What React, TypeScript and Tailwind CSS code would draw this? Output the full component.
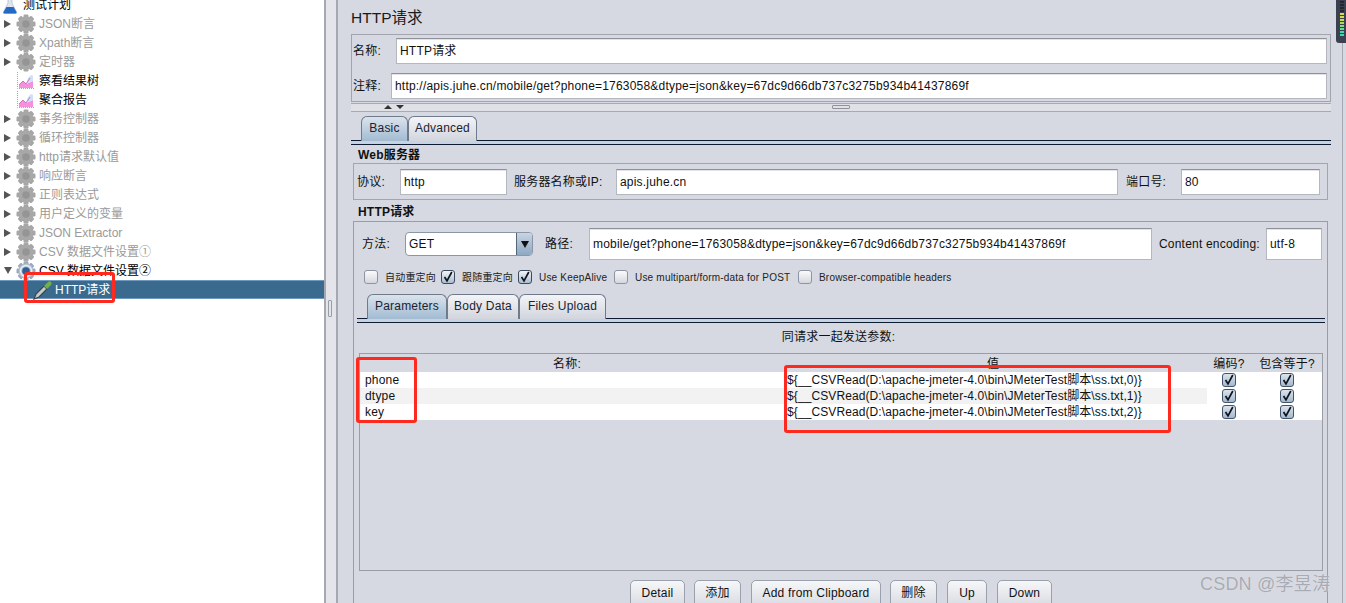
import type { ReactNode } from "react";

const treeItems = [
  { label: "测试计划", icon: "flask", dark: true },
  { label: "JSON断言", icon: "gear", arrow: "right" },
  { label: "Xpath断言", icon: "gear", arrow: "right" },
  { label: "定时器", icon: "gear", arrow: "right" },
  { label: "察看结果树", icon: "chart", dark: true },
  { label: "聚合报告", icon: "chart", dark: true },
  { label: "事务控制器", icon: "gear", arrow: "right" },
  { label: "循环控制器", icon: "gear", arrow: "right" },
  { label: "http请求默认值", icon: "gear", arrow: "right" },
  { label: "响应断言", icon: "gear", arrow: "right" },
  { label: "正则表达式", icon: "gear", arrow: "right" },
  { label: "用户定义的变量", icon: "gear", arrow: "right" },
  { label: "JSON Extractor", icon: "gear", arrow: "right" },
  { label: "CSV 数据文件设置①", icon: "gear", arrow: "right" },
  { label: "CSV 数据文件设置②", icon: "gearActive", arrow: "down", dark: true },
];

const params = [
  { name: "phone", value: "${__CSVRead(D:\\apache-jmeter-4.0\\bin\\JMeterTest脚本\\ss.txt,0)}" },
  { name: "dtype", value: "${__CSVRead(D:\\apache-jmeter-4.0\\bin\\JMeterTest脚本\\ss.txt,1)}" },
  { name: "key", value: "${__CSVRead(D:\\apache-jmeter-4.0\\bin\\JMeterTest脚本\\ss.txt,2)}" },
];

const meterBars = ["#23262f", "#23262f", "#23262f", "#23262f", "#d9d94a", "#d9d94a", "#c6dc50", "#a8dc5a", "#80dc78", "#60dc98", "#40d8b0", "#40d8b0"];

const url = "http://apis.juhe.cn/mobile/get?phone=1763058&dtype=json&key=67dc9d66db737c3275b934b41437869f";

function Gear({ active }: { active?: boolean }) {
  const teeth = [0, 45, 90, 135, 180, 225, 270, 315];
  return (
    <svg width="20" height="20" viewBox="0 0 20 20" className="shrink-0">
      {teeth.map((deg) => (
        <rect key={deg} x="7.5" y="0.5" width="5" height="5" rx="1.2" fill={active ? "#9aa8bb" : "#a6a6a6"} transform={`rotate(${deg} 10 10)`} />
      ))}
      <circle cx="10" cy="10" r="7.5" fill={active ? "#b4bfcd" : "#a8a8a8"} />
      <circle cx="10" cy="10" r="3.8" fill={active ? "#2f5d9a" : "#959595"} />
      {active && <circle cx="10" cy="10" r="5.500" fill="none" stroke="#e8eef5" strokeWidth="1.400" />}
    </svg>
  );
}

function Flask() {
  return (
    <svg width="14" height="19" viewBox="0 0 14 19" className="shrink-0">
      <path d="M5 0h4v8l4.500 9q.3 1.500-1 1.500H1.500Q.2 18.500.5 17L5 8z" fill="#dfe6f0" stroke="#a3aebf" strokeWidth="0.600" />
      <path d="M3.500 12h7l3 5q.3 1.500-1 1.500H1.500Q.2 18.500.5 17z" fill="#2468c8" />
    </svg>
  );
}

function ChartIcon() {
  return (
    <svg width="17" height="17" viewBox="0 0 17 17" className="shrink-0">
      <path d="M.5 0v16.500H17" fill="none" stroke="#a8a8a8" strokeWidth="1" strokeDasharray="1 1" />
      <path d="M2 16v-3l4-4 3 3 7-3v7z" fill="#f490de" />
      <path d="M9 12l2-6 3-3 2 1v5z" fill="#cfe0f8" />
      <path d="M2 13l4-4 3 3 4-6" fill="none" stroke="#c85ab0" strokeWidth="0.800" />
    </svg>
  );
}

function Dropper() {
  return (
    <svg width="20" height="20" viewBox="0 0 20 20" className="shrink-0">
      <path d="M1 19l2-5 8-8 3 3-8 8z" fill="#c4ccc9" stroke="#39444d" strokeWidth="1.200" />
      <path d="M11 6l4-4q1.500-1.500 3 0t0 3l-4 4z" fill="#6fb04c" />
    </svg>
  );
}

function TreeRow({ item }: { item: (typeof treeItems)[number] }) {
  const offset = item.icon === "flask" ? "pl-[3px]" : item.icon === "chart" ? "pl-[17px]" : "pl-[4px]";
  const gap = item.icon === "flask" ? "ml-[6px]" : item.icon === "chart" ? "ml-[5px]" : "ml-[3px]";
  return (
    <div className={`flex h-[19px] items-center ${offset}`}>
      {item.arrow === "right" && <span className="mr-[5px] h-0 w-0 border-y-[4px] border-l-[7px] border-y-transparent border-l-[#555]" />}
      {item.arrow === "down" && <span className="mr-[4px] h-0 w-0 border-x-[4px] border-t-[7px] border-x-transparent border-t-[#555]" />}
      {item.icon === "gear" && <Gear />}
      {item.icon === "gearActive" && <Gear active />}
      {item.icon === "flask" && <Flask />}
      {item.icon === "chart" && <ChartIcon />}
      <span className={`whitespace-nowrap ${gap} ${item.dark ? "text-black" : "text-[#9a9a9a]"}`}>{item.label}</span>
    </div>
  );
}

function Field({ className, children }: { className: string; children: ReactNode }) {
  return (
    <div className={`flex items-center whitespace-nowrap border border-[#b4b7bf] border-t-[#8e9198] bg-white pl-[3px] text-[#111] shadow-[inset_0_1px_0_#e2e3e6] ${className}`}>
      {children}
    </div>
  );
}

function Tab({ label, active, className }: { label: string; active?: boolean; className: string }) {
  return (
    <div
      className={`flex h-[25px] items-center justify-center rounded-t-[6px] border border-b-0 border-[#6f7a8a] pb-[3px] text-[#1c2230] ${
        active ? "bg-linear-to-b from-[#dbe3ec] to-[#a2bbd2]" : "bg-linear-to-b from-[#f3f4f7] to-[#d2d5dd]"
      } ${className}`}
    >
      {label}
    </div>
  );
}

function TabLine({ className }: { className: string }) {
  return <div className={`h-[5px] border-y border-[#0e1a30] bg-[#c5d3e3] ${className}`} />;
}

function CheckBox({ checked, className = "" }: { checked?: boolean; className?: string }) {
  return (
    <span
      className={`flex h-[14px] w-[14px] shrink-0 items-center justify-center rounded-[3px] border ${
        checked ? "border-[#3c4a5c] bg-linear-to-b from-[#f2f5f8] to-[#a9bdd2]" : "border-[#8d95a2] bg-linear-to-b from-[#fbfbfc] to-[#d4d7de]"
      } ${className}`}
    >
      {checked && (
        <svg width="12" height="12" viewBox="0 0 12 12">
          <path d="M2.500 6l2.500 3.800L9.800 1" fill="none" stroke="#10151d" strokeWidth="1.700" />
        </svg>
      )}
    </span>
  );
}

function Option({ label, checked, className }: { label: string; checked?: boolean; className: string }) {
  return (
    <div className={`flex items-center ${className}`}>
      <CheckBox checked={checked} />
      <span className="ml-[7px] whitespace-nowrap text-[10px] text-[#222]">{label}</span>
    </div>
  );
}

function ActionButton({ label, className }: { label: string; className: string }) {
  return (
    <div className={`flex h-[30px] items-start justify-center rounded-t-[5px] border border-[#9aa0ac] bg-linear-to-b from-[#f6f7f9] to-[#d5d8df] pt-[3px] text-[#111] ${className}`}>
      {label}
    </div>
  );
}

function Sidebar() {
  return (
    <aside className="h-full w-[324px] shrink-0 overflow-hidden bg-white">
      <div className="-mt-[5px]">
        {treeItems.map((item) => (
          <TreeRow key={item.label} item={item} />
        ))}
        <div className="flex h-[19px] items-center border-y border-[#6f9ac0] bg-[#3b6a8f] pl-[33px] text-white">
          <Dropper />
          <span className="ml-[2px]">HTTP请求</span>
        </div>
      </div>
    </aside>
  );
}

function Splitter() {
  return (
    <div className="flex h-full w-[14px] shrink-0 items-center justify-center border-x-2 border-[#a5a8b1] bg-[#e3e5ea]">
      <div className="-ml-[2px] mt-[14px] h-[17px] w-[4px] rounded-[1px] border border-[#9a9da6]" />
    </div>
  );
}

function ParamsTable() {
  return (
    <div className="ml-[2px] mr-[1px] mt-[9px] h-[218px] border border-[#9a9da6] pt-[1px]">
      <div className="flex h-[17px] items-center text-[#111]">
        <span className="w-[415px] pl-[193px]">名称:</span>
        <span className="w-[431px] pl-[212px]">值</span>
        <span className="w-[46px] text-center">编码?</span>
        <span className="w-[70px] text-center">包含等于?</span>
      </div>
      {params.map((row, i) => (
        <div key={row.name} className={`flex h-[16px] items-center text-[#111] ${i === 1 ? "bg-linear-to-r from-[#f2f2f2] from-[88%] to-white to-[88%]" : "bg-white"}`}>
          <span className="w-[427px] pl-[5px]">{row.name}</span>
          <span className="w-[419px] whitespace-nowrap tracking-[0.1px]">{row.value}</span>
          <span className="flex w-[46px] justify-center">
            <CheckBox checked className="!border-[#44536a] !from-[#dbe4ee] !to-[#a3b9d0]" />
          </span>
          <span className="flex w-[70px] justify-center">
            <CheckBox checked className="!border-[#44536a] !from-[#dbe4ee] !to-[#a3b9d0]" />
          </span>
        </div>
      ))}
    </div>
  );
}

function HttpPanel() {
  return (
    <div className="ml-[2px] mt-[2px] h-[400px] w-[975px] border border-[#9a9da6] px-[3px] pt-[6px]">
      <div className="flex h-[32px] items-center">
        <span className="ml-[5px] w-[43px]">方法:</span>
        <div className="flex h-[24px] w-[128px] overflow-hidden rounded-[4px] border border-[#8b97a6] bg-white">
          <span className="flex-1 pl-[3px] leading-[22px] text-[#111]">GET</span>
          <span className="flex w-[16px] items-center justify-center border-l border-[#55657a] bg-linear-to-b from-[#c8d5e2] to-[#8ea8c2]">
            <span className="h-0 w-0 border-x-[4px] border-t-[7px] border-x-transparent border-t-[#111]" />
          </span>
        </div>
        <span className="ml-[12px] w-[44px]">路径:</span>
        <Field className="h-[32px] w-[563px] pb-[1px]">{`mobile/get?phone=1763058&dtype=json&key=67dc9d66db737c3275b934b41437869f`}</Field>
        <span className="ml-[7px] w-[107px]">Content encoding:</span>
        <Field className="h-[32px] w-[56px] pb-[1px]">utf-8</Field>
      </div>
      <div className="mt-[10px] flex h-[14px] items-center">
        <Option label="自动重定向" className="ml-[7px] w-[77px]" />
        <Option label="跟随重定向" checked className="w-[77px]" />
        <Option label="Use KeepAlive" checked className="w-[96px]" />
        <Option label="Use multipart/form-data for POST" className="w-[184px]" />
        <Option label="Browser-compatible headers" className="w-[180px]" />
      </div>
      <div className="ml-[10px] mt-[10px] flex">
        <Tab label="Parameters" active className="w-[80px]" />
        <Tab label="Body Data" className="w-[72px]" />
        <Tab label="Files Upload" className="w-[87px]" />
      </div>
      <TabLine className="-mt-[1px] mr-[-1px]" />
      <div className="mt-[7px] h-[14px] pr-[4px] text-center leading-[14px] text-[#111]">同请求一起发送参数:</div>
      <ParamsTable />
      <div className="mt-[9px] flex">
        <ActionButton label="Detail" className="ml-[273px] w-[55px]" />
        <ActionButton label="添加" className="ml-[9px] w-[47px]" />
        <ActionButton label="Add from Clipboard" className="ml-[10px] w-[130px]" />
        <ActionButton label="删除" className="ml-[9px] w-[47px]" />
        <ActionButton label="Up" className="ml-[10px] w-[40px]" />
        <ActionButton label="Down" className="ml-[10px] w-[55px]" />
      </div>
    </div>
  );
}

function Editor() {
  return (
    <main className="h-full w-[1004px] shrink-0 overflow-hidden bg-[#d6d9e1] pl-[13px] tracking-[0.2px] text-[#111]">
      <h1 className="mt-[8px] h-[19px] text-[15.5px] font-normal leading-[19px] tracking-normal text-[#1b1b1b]">HTTP请求</h1>
      <div className="mt-[7px] h-[68px] w-[980px] border border-[#a2a5ad] px-[1px] pt-[3px]">
        <div className="flex h-[26px] items-center">
          <span className="w-[43px]">名称:</span>
          <Field className="h-[26px] w-[931px] pb-[1px]">HTTP请求</Field>
        </div>
        <div className="mt-[9px] flex h-[26px] items-center">
          <span className="w-[38px]">注释:</span>
          <Field className="h-[26px] w-[936px] pb-[1px]">{url}</Field>
        </div>
      </div>
      <div className="relative mt-[1px] h-[9px] w-[980px] border-y border-[#a7aab2] bg-[#dfe1e6]">
        <span className="absolute left-[33px] top-[1px] h-0 w-0 border-x-[4px] border-b-[4px] border-x-transparent border-b-[#333]" />
        <span className="absolute left-[45px] top-[1px] h-0 w-0 border-x-[4px] border-t-[4px] border-x-transparent border-t-[#333]" />
        <span className="absolute left-[481px] top-[1px] h-[4px] w-[18px] rounded-[1px] border border-[#8f929c]" />
      </div>
      <div className="ml-[10px] mt-[4px] flex">
        <Tab label="Basic" active className="w-[47px]" />
        <Tab label="Advanced" className="w-[69px]" />
      </div>
      <TabLine className="-mt-[1px] w-[980px]" />
      <div className="ml-[7px] mt-[3px] h-[14px] font-bold leading-[14px]">Web服务器</div>
      <div className="ml-[2px] mt-[1px] flex h-[37px] w-[975px] items-center border border-[#a2a5ad]">
        <span className="ml-[3px] w-[43px]">协议:</span>
        <Field className="h-[26px] w-[107px] pt-[1px]">http</Field>
        <span className="ml-[7px] w-[102px]">服务器名称或IP:</span>
        <Field className="h-[26px] w-[502px] pt-[1px]">apis.juhe.cn</Field>
        <span className="ml-[8px] w-[55px]">端口号:</span>
        <Field className="h-[26px] w-[139px] pt-[1px]">80</Field>
      </div>
      <div className="ml-[7px] mt-[5px] h-[14px] font-bold leading-[14px]">HTTP请求</div>
      <HttpPanel />
    </main>
  );
}

export default function App() {
  return (
    <div className="relative flex h-[603px] w-[1346px] overflow-hidden bg-[#d6d9e1] text-[12px] [font-family:'Liberation_Sans','Noto_Sans_CJK_SC',sans-serif]">
      <Sidebar />
      <Splitter />
      <Editor />
      <div className="h-full w-[4px] border-l border-[#a5a8b1]" />

      {/* Meter widget in the window corner */}
      <div className="absolute right-0 top-0 flex h-[43px] w-[10px] flex-col gap-[1px] rounded-bl-[3px] bg-[#3b4150] pl-[4px] pt-[1px]">
        {meterBars.map((c, i) => (
          <span key={i} className="h-[2px] w-[4px]" style={{ backgroundColor: c }} />
        ))}
      </div>

      {/* Red annotations drawn over the screenshot */}
      <div className="absolute left-[24px] top-[272px] h-[31px] w-[91px] rounded-[3px] border-[3px] border-[#ff2a1f]" />
      <div className="absolute left-[356px] top-[357px] h-[66px] w-[61px] rounded-[3px] border-[3px] border-[#ff2a1f]" />
      <div className="absolute left-[784px] top-[365px] h-[68px] w-[387px] rounded-[3px] border-[3px] border-[#ff2a1f]" />

      <div className="absolute left-[1200px] top-[572px] text-[18px] leading-[24px] tracking-[0.2px] text-[#a8abb3] [text-shadow:0_0_1px_#eee]">CSDN @李昱涛</div>
    </div>
  );
}
